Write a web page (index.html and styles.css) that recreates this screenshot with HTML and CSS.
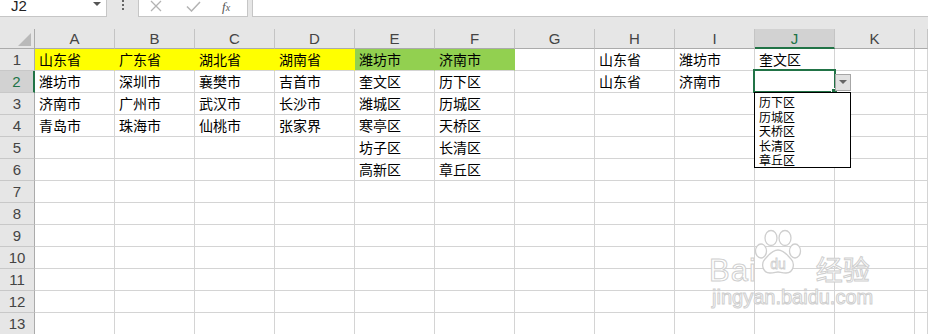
FILE: index.html
```html
<!DOCTYPE html>
<html lang="zh-CN">
<head>
  <meta charset="UTF-8">
  <title>数据验证 - 二级下拉菜单</title>
  <link rel="stylesheet" href="styles.css">
</head>
<body>
<div class="app">

  <!-- formula bar -->
  <div class="topbar">
    <div class="namebox">
      <span class="ref">J2</span>
      <svg class="nb-arrow" width="8" height="5" viewBox="0 0 8 5"><path d="M0 0h8L4 4z" fill="#555"/></svg>
    </div>
    <div class="grip">
      <svg width="3" height="12" viewBox="0 0 3 12"><rect x="0" y="0" width="2" height="2" fill="#666"/><rect x="0" y="4" width="2" height="2" fill="#666"/><rect x="0" y="8" width="2" height="2" fill="#666"/></svg>
    </div>
    <div class="fbtns">
      <svg class="fb-cancel" width="12" height="12" viewBox="0 0 12 12"><path d="M1 1l10 10M11 1L1 11" stroke="#b3b3b3" stroke-width="1.3" fill="none"/></svg>
      <svg class="fb-enter" width="15" height="11" viewBox="0 0 15 11"><path d="M1 5.5l4.5 4.5L14 1" stroke="#b3b3b3" stroke-width="1.5" fill="none"/></svg>
      <span class="fx">f<sub>x</sub></span>
    </div>
    <div class="finput"></div>
  </div>

  <!-- sheet -->
  <div class="sheet">
    <div class="row head">
      <div class="corner"><svg width="14" height="13" viewBox="0 0 14 13"><path d="M13 0v13H0z" fill="#b9b9b9"/></svg></div>
      <div>A</div><div>B</div><div>C</div><div>D</div><div>E</div><div>F</div>
      <div>G</div><div>H</div><div>I</div><div class="sel">J</div><div>K</div><div></div>
    </div>
    <div class="row">
      <div class="rh">1</div>
      <div class="yellow">山东省</div><div class="yellow">广东省</div><div class="yellow">湖北省</div><div class="yellow">湖南省</div>
      <div class="green">潍坊市</div><div class="green">济南市</div>
      <div></div><div>山东省</div><div>潍坊市</div><div>奎文区</div><div></div><div></div>
    </div>
    <div class="row">
      <div class="rh sel">2</div>
      <div>潍坊市</div><div>深圳市</div><div>襄樊市</div><div>吉首市</div>
      <div>奎文区</div><div>历下区</div>
      <div></div><div>山东省</div><div>济南市</div><div></div><div></div><div></div>
    </div>
    <div class="row">
      <div class="rh">3</div>
      <div>济南市</div><div>广州市</div><div>武汉市</div><div>长沙市</div>
      <div>潍城区</div><div>历城区</div>
      <div></div><div></div><div></div><div></div><div></div><div></div>
    </div>
    <div class="row">
      <div class="rh">4</div>
      <div>青岛市</div><div>珠海市</div><div>仙桃市</div><div>张家界</div>
      <div>寒亭区</div><div>天桥区</div>
      <div></div><div></div><div></div><div></div><div></div><div></div>
    </div>
    <div class="row">
      <div class="rh">5</div>
      <div></div><div></div><div></div><div></div>
      <div>坊子区</div><div>长清区</div>
      <div></div><div></div><div></div><div></div><div></div><div></div>
    </div>
    <div class="row">
      <div class="rh">6</div>
      <div></div><div></div><div></div><div></div>
      <div>高新区</div><div>章丘区</div>
      <div></div><div></div><div></div><div></div><div></div><div></div>
    </div>
    <div class="row"><div class="rh">7</div><div></div><div></div><div></div><div></div><div></div><div></div><div></div><div></div><div></div><div></div><div></div><div></div></div>
    <div class="row"><div class="rh">8</div><div></div><div></div><div></div><div></div><div></div><div></div><div></div><div></div><div></div><div></div><div></div><div></div></div>
    <div class="row"><div class="rh">9</div><div></div><div></div><div></div><div></div><div></div><div></div><div></div><div></div><div></div><div></div><div></div><div></div></div>
    <div class="row"><div class="rh">10</div><div></div><div></div><div></div><div></div><div></div><div></div><div></div><div></div><div></div><div></div><div></div><div></div></div>
    <div class="row"><div class="rh">11</div><div></div><div></div><div></div><div></div><div></div><div></div><div></div><div></div><div></div><div></div><div></div><div></div></div>
    <div class="row"><div class="rh">12</div><div></div><div></div><div></div><div></div><div></div><div></div><div></div><div></div><div></div><div></div><div></div><div></div></div>
    <div class="row"><div class="rh">13</div><div></div><div></div><div></div><div></div><div></div><div></div><div></div><div></div><div></div><div></div><div></div><div></div></div>
  </div>

  <!-- active cell J2 with its validation list -->
  <div class="active-cell"><span class="handle"></span></div>
  <div class="dd-button">
    <svg width="8" height="5" viewBox="0 0 8 5"><path d="M0 0h8L4 4z" fill="#666"/></svg>
  </div>
  <ul class="dd-list">
    <li>历下区</li>
    <li>历城区</li>
    <li>天桥区</li>
    <li>长清区</li>
    <li>章丘区</li>
  </ul>

  <!-- watermark -->
  <div class="watermark">
    <div class="wm-top">
      <span class="wm-bai">Bai</span>
      <svg class="wm-paw" width="48" height="46" viewBox="0 0 48 46">
        <g fill="#fff" stroke="#cfcfcf" stroke-width="1.3">
          <ellipse cx="7" cy="22" rx="5.5" ry="7"/>
          <ellipse cx="17" cy="9" rx="6" ry="7.5"/>
          <ellipse cx="31" cy="9" rx="6" ry="7.5"/>
          <ellipse cx="41" cy="22" rx="5.5" ry="7"/>
          <path d="M24 21c-6 0-9 5-13 9-4 4-3 14 5 14 4 0 6-1 8-1s4 1 8 1c8 0 9-10 5-14-4-4-7-9-13-9z"/>
        </g>
        <text x="24" y="40" text-anchor="middle" class="wm-du">du</text>
      </svg>
      <span class="wm-jy">经验</span>
    </div>
    <div class="wm-url">jingyan.baidu.com</div>
  </div>

</div>
</body>
</html>
```

FILE: styles.css
```css
body {
  margin: 0;
  width: 928px;
  height: 334px;
  overflow: hidden;
  background-color: #fff;
  font-family: "Noto Sans CJK SC", "Liberation Sans", sans-serif;
}
.app {
  position: relative;
  height: 334px;
  overflow: hidden;
}

/* formula bar */
.topbar {
  display: flex;
  height: 29px;
  background-color: #e6e6e6;
}
.namebox {
  position: relative;
  width: 107px;
  height: 17px;
  background-color: #fff;
  border-right: 1px solid #c6c6c6;
  border-bottom: 1px solid #c6c6c6;
  box-sizing: border-box;
}
.ref {
  position: absolute;
  left: 11px;
  top: -3px;
  font-family: "Liberation Sans", sans-serif;
  font-size: 15px;
  color: #222;
}
.nb-arrow {
  position: absolute;
  left: 93px;
  top: 2px;
}
.grip {
  width: 31px;
  padding-left: 15px;
  box-sizing: border-box;
  line-height: 0;
}
.fbtns {
  display: flex;
  align-items: flex-start;
  width: 110px;
  height: 17px;
  background-color: #fff;
  border-right: 1px solid #c6c6c6;
  border-bottom: 1px solid #c6c6c6;
  border-left: 1px solid #c6c6c6;
  box-sizing: border-box;
}
.fb-cancel {
  margin: 0 0 0 11px;
}
.fb-enter {
  margin: 1px 0 0 24px;
}
.fx {
  margin: 0 0 0 21px;
  font-family: "Liberation Serif", serif;
  font-style: italic;
  font-size: 13px;
  line-height: 13px;
  color: #555;
}
.fx sub {
  font-size: 10px;
  vertical-align: 0;
}
.finput {
  flex: 1;
  height: 17px;
  margin-left: 4px;
  background-color: #fff;
  border-left: 1px solid #c6c6c6;
  border-bottom: 1px solid #c6c6c6;
  box-sizing: border-box;
}

/* grid */
.row {
  display: grid;
  grid-template-columns: 35px repeat(11, 80px) 1fr;
  height: 22px;
}
.row > div {
  box-sizing: border-box;
  border-right: 1px solid #d4d4d4;
  border-bottom: 1px solid #d4d4d4;
  padding-left: 4px;
  font-size: 14px;
  line-height: 21px;
  color: #000;
  white-space: nowrap;
  overflow: hidden;
}
.row.head {
  height: 20px;
}
.row.head > div {
  background-color: #e6e6e6;
  border-right-color: #c4c4c4;
  border-bottom-color: #ababab;
  padding-left: 0;
  text-align: center;
  font-family: "Liberation Sans", sans-serif;
  font-size: 15px;
  line-height: 20px;
  color: #444;
}
.row.head > .corner {
  position: relative;
  border-right-color: #ababab;
}
.corner svg {
  position: absolute;
  right: 2px;
  bottom: 2px;
}
.row.head > .sel {
  background-color: #d2d2d2;
  border-bottom: 2px solid #217346;
  color: #217346;
}
.row > .rh {
  background-color: #e6e6e6;
  border-right-color: #ababab;
  border-bottom-color: #c8c8c8;
  padding-left: 0;
  text-align: center;
  font-family: "Liberation Sans", sans-serif;
  font-size: 15px;
  color: #444;
}
.row > .rh.sel {
  background-color: #d2d2d2;
  border-right: 2px solid #217346;
  color: #217346;
}
.row > .yellow {
  background-color: #ffff00;
  border-right-color: #ffff00;
}
.row > .green {
  background-color: #92d050;
  border-right-color: #92d050;
}

/* selection + list */
.active-cell {
  position: absolute;
  left: 753px;
  top: 69px;
  width: 83px;
  height: 24px;
  border: 2px solid #217346;
  box-sizing: border-box;
}
.handle {
  position: absolute;
  right: -4px;
  bottom: -4px;
  width: 5px;
  height: 5px;
  background-color: #217346;
  border: 1px solid #fff;
}
.dd-button {
  position: absolute;
  left: 835px;
  top: 74px;
  width: 16px;
  height: 17px;
  box-sizing: border-box;
  background-color: #e1e1e1;
  border: 1px solid #a6a6a6;
  display: flex;
  justify-content: center;
  align-items: center;
}
.dd-list {
  position: absolute;
  left: 754px;
  top: 92px;
  width: 97px;
  height: 76px;
  margin: 0;
  padding: 2px 0 0 4px;
  box-sizing: border-box;
  list-style: none;
  background-color: #fff;
  border: 1px solid #000;
  font-size: 12px;
  line-height: 14.5px;
  color: #000;
}

/* watermark */
.watermark {
  position: absolute;
  left: 709px;
  top: 229px;
  color: #fff;
  -webkit-text-stroke: 1px #cfcfcf;
}
.wm-top {
  display: flex;
  align-items: flex-end;
  height: 56px;
}
.wm-bai {
  font-family: "Liberation Sans", sans-serif;
  font-size: 31px;
  line-height: 29px;
  letter-spacing: 1px;
}
.wm-paw {
  margin: 0 14px 0 -3px;
  align-self: flex-start;
  -webkit-text-stroke: 0;
}
.wm-du {
  font-family: "Liberation Sans", sans-serif;
  font-size: 14px;
  fill: #fff;
  stroke: #cfcfcf;
  stroke-width: 0.8;
}
.wm-jy {
  font-size: 27px;
  line-height: 33px;
}
.wm-url {
  font-family: "Liberation Sans", sans-serif;
  font-size: 20px;
  line-height: 24px;
  margin-left: 3px;
}
```
